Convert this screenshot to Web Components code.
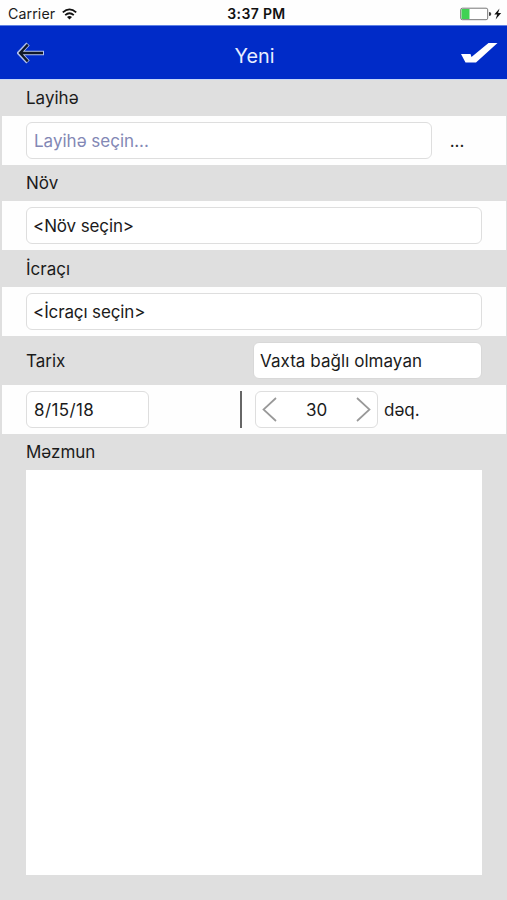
<!DOCTYPE html>
<html lang="az">
<head>
<meta charset="utf-8">
<title>Yeni</title>
<style>
html,body{margin:0;height:100%}
body{background:#dfdfdf;font-family:Inter,"Noto Sans",sans-serif;font-size:17px;line-height:20px;color:#1b1b1b;overflow:hidden}
</style>
</head>
<body>
<task-screen></task-screen>
<script>
function define(name, markup) {
  const t = document.createElement('template');
  t.innerHTML = markup;
  customElements.define(name, class extends HTMLElement {
    constructor() {
      super();
      this.attachShadow({mode: 'open'}).append(t.content.cloneNode(true));
    }
  });
}

define('status-bar', `
<style>
:host{display:grid;grid-template-columns:1fr auto 1fr;align-items:center;height:25px;padding:2px 5px 0 8px;box-sizing:border-box;background:#fefefe;font-size:14.2px;line-height:18px}
.left{display:flex;align-items:center;gap:7px}
.left span{letter-spacing:.1px}
.time{font-weight:600;font-size:14px;letter-spacing:.35px;color:#111;margin-left:3px}
.right{justify-self:end;display:flex}
svg{display:block}
</style>
<div class="left"><span>Carrier</span>
<svg width="15" height="12" viewBox="0 0 15 12" fill="none" stroke="#111" stroke-width="1.800"><path d="M.8 4.4Q7.500-1.600 14.200 4.400M3.200 7.100Q7.500 3.300 11.800 7.100"/><path d="M7.500 11.500L5 8.900Q7.500 7 10 8.900Z" fill="#111" stroke="none"/></svg></div>
<span class="time">3:37 PM</span>
<svg class="right" width="42" height="14" viewBox="0 0 42 14"><rect x=".7" y="1.200" width="27" height="11.500" rx="1.600" fill="#fff" stroke="#777"/><path d="M1.500 2H9.500V12H1.500Z" fill="#3fd254"/><path d="M29 5Q31.300 5 31.300 7T29 9Z" fill="#444"/><path d="M39.500 1.500L34.300 7.600H37.200L35.600 12.400L41.200 6.100H38.100Z" fill="#111"/></svg>`);

define('nav-bar', `
<style>
:host{display:grid;grid-template-columns:1fr auto 1fr;align-items:center;height:55px;box-sizing:border-box;padding:0 9px 0 17px;background:#002bc8;border-top:1px solid #5f82e4;border-bottom:1px solid #c7d6f7;color:#e8edff}
.title{font-size:19.8px;line-height:24px;padding-top:6px;margin-right:6px}
svg{display:block}.check{justify-self:end}
</style>
<svg width="28" height="22" viewBox="0 0 28 22" fill="none"><path d="M11 2L2.500 11L11 20M3 11H27" stroke="#b4c3f0" stroke-width="4.600"/><path d="M10.800 2.600L3 11L10.800 19.400M3 11H26" stroke="#101827" stroke-width="2.300"/></svg>
<span class="title"><slot></slot></span>
<svg class="check" width="37" height="22" viewBox="0 0 37 22"><path d="M0 12H9.500L10.500 15L27.500 1H36.500L15 20.500H4.500Z" fill="#fff"/></svg>`);

define('section-label', `
<style>
:host{display:flex;align-items:center;box-sizing:border-box;height:36px;padding:0 25px 0 26px;justify-content:space-between}
:host([tall]){height:49px}
</style><slot></slot>`);

define('form-row', `
<style>
:host{display:flex;align-items:center;box-sizing:border-box;height:49px;margin:0 1px 0 2px;padding:0 24px;background:#fefefe}
</style><slot></slot>`);

define('text-box', `
<style>
:host{display:flex;align-items:center;box-sizing:border-box;height:37px;flex:1;border:1.500px solid #dedede;border-radius:6px;background:#fff;padding:0 7px;white-space:nowrap}
:host([placeholder]){color:#8388b5}
:host([choice]){padding-left:6px;letter-spacing:-.12px}
:host([date]){flex:none;width:123px;letter-spacing:.4px}
:host([select]){flex:none;width:229px;padding:0 6px;letter-spacing:.05px;border-color:#d8d8d8}
</style><slot></slot>`);

define('number-stepper', `
<style>
:host{display:flex;align-items:center;justify-content:space-between;box-sizing:border-box;width:123px;height:37px;border:1.500px solid #dedede;border-radius:6px;background:#fff;padding:0 6px}
svg{display:block}
</style>
<svg width="15" height="26" viewBox="0 0 15 26" fill="none" stroke="#999" stroke-width="1.700"><path d="M14 1L1.500 12.500L14 24"/></svg>
<slot></slot>
<svg width="15" height="26" viewBox="0 0 15 26" fill="none" stroke="#999" stroke-width="1.700"><path d="M1 1L13.500 12.500L1 24"/></svg>`);

define('task-screen', `
<style>
:host{display:flex;flex-direction:column;height:900px;background:#dfdfdf}
.more{width:50px;text-align:center}
.bar{width:2px;height:37px;background:#666;margin-left:91px;margin-right:13px}
.unit{margin-left:6px}
.memo{height:405px;margin:0 25px 0 26px;background:#fff}
.g37{height:37px}
</style>
<status-bar></status-bar>
<nav-bar>Yeni</nav-bar>
<section-label><span>Layihə</span></section-label>
<form-row><text-box placeholder><span>Layihə seçin...</span></text-box><span class="more">...</span></form-row>
<section-label><span>Növ</span></section-label>
<form-row><text-box choice><span>&lt;Növ seçin&gt;</span></text-box></form-row>
<section-label class="g37"><span>İcraçı</span></section-label>
<form-row><text-box choice><span>&lt;İcraçı seçin&gt;</span></text-box></form-row>
<section-label tall><span>Tarix</span><text-box select><span>Vaxta bağlı olmayan</span></text-box></section-label>
<form-row><text-box date><span>8/15/18</span></text-box><div class="bar"></div><number-stepper><span>30</span></number-stepper><span class="unit">dəq.</span></form-row>
<section-label><span>Məzmun</span></section-label>
<div class="memo"></div>`);
</script>
</body>
</html>
